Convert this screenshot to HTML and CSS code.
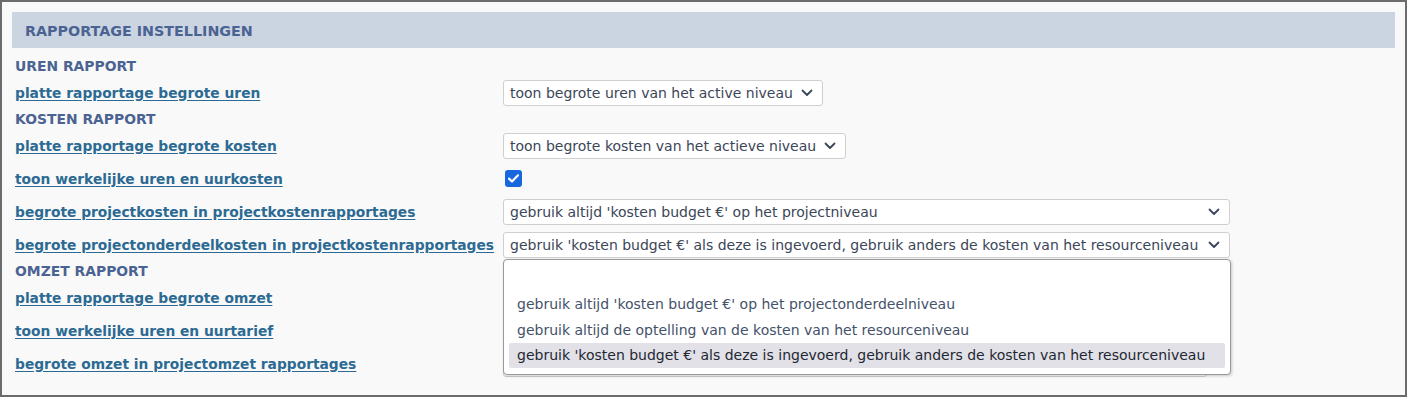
FILE: index.html
```html
<!DOCTYPE html>
<html lang="nl">
<head>
    <meta charset="UTF-8">
    <title>Rapportage instellingen</title>
    <link rel="stylesheet" href="styles.css">
</head>
<body>
    <div class="frame">
        <div class="panel-title">RAPPORTAGE INSTELLINGEN</div>

        <div class="settings">
            <div class="section">UREN RAPPORT</div>
            <div class="row">
                <a class="label" href="#">platte rapportage begrote uren</a>
                <div class="field">
                    <div class="select">toon begrote uren van het active niveau</div>
                </div>
            </div>

            <div class="section">KOSTEN RAPPORT</div>
            <div class="row">
                <a class="label" href="#">platte rapportage begrote kosten</a>
                <div class="field">
                    <div class="select">toon begrote kosten van het actieve niveau</div>
                </div>
            </div>
            <div class="row">
                <a class="label" href="#">toon werkelijke uren en uurkosten</a>
                <div class="field">
                    <span class="checkbox">
                        <svg width="11" height="9" viewBox="0 0 11 9"><path d="M1 4.6 L4 7.5 L10 1.3" fill="none" stroke="#fff" stroke-width="2.2" stroke-linecap="round" stroke-linejoin="round"/></svg>
                    </span>
                </div>
            </div>
            <div class="row">
                <a class="label" href="#">begrote projectkosten in projectkostenrapportages</a>
                <div class="field">
                    <div class="select wide">gebruik altijd 'kosten budget €' op het projectniveau</div>
                </div>
            </div>
            <div class="row">
                <a class="label" href="#">begrote projectonderdeelkosten in projectkostenrapportages</a>
                <div class="field open">
                    <div class="select wide">gebruik 'kosten budget €' als deze is ingevoerd, gebruik anders de kosten van het resourceniveau</div>
                    <ul class="dropdown">
                        <li class="blank"></li>
                        <li>gebruik altijd 'kosten budget €' op het projectonderdeelniveau</li>
                        <li>gebruik altijd de optelling van de kosten van het resourceniveau</li>
                        <li class="active">gebruik 'kosten budget €' als deze is ingevoerd, gebruik anders de kosten van het resourceniveau</li>
                    </ul>
                </div>
            </div>

            <div class="section">OMZET RAPPORT</div>
            <div class="row">
                <a class="label" href="#">platte rapportage begrote omzet</a>
                <div class="field">
                    <div class="select hidden-box short"></div>
                </div>
            </div>
            <div class="row">
                <a class="label" href="#">toon werkelijke uren en uurtarief</a>
                <div class="field"></div>
            </div>
            <div class="row">
                <a class="label" href="#">begrote omzet in projectomzet rapportages</a>
                <div class="field">
                    <div class="select hidden-box long"></div>
                </div>
            </div>
        </div>
    </div>
</body>
</html>
```

FILE: styles.css
```css
html, body {
    margin: 0;
    padding: 0;
}

body {
    font-family: "DejaVu Sans", Verdana, sans-serif;
    background-color: #f9f9f9;
}

.frame {
    box-sizing: border-box;
    height: 397px;
    border: 2px solid #6b6b6b;
    padding: 10px 10px 0 10px;
    overflow: hidden;
}

.panel-title {
    height: 36px;
    line-height: 38px;
    padding-left: 13px;
    background-color: #cbd5e1;
    color: #4b6392;
    font-size: 14.3px;
    font-weight: bold;
}

.settings {
    padding-top: 8px;
}

.section {
    height: 20px;
    line-height: 20px;
    padding-left: 3px;
    color: #4b6392;
    font-size: 13.9px;
    font-weight: bold;
}

.row {
    display: grid;
    grid-template-columns: 491px 1fr;
    align-items: center;
    height: 33px;
}

.label {
    padding-left: 3px;
    color: #2c6a93;
    font-size: 13.8px;
    font-weight: bold;
    text-decoration: underline;
    text-underline-offset: 2px;
}

.field {
    position: relative;
    display: flex;
    align-items: center;
}

.select {
    box-sizing: border-box;
    height: 26px;
    line-height: 24px;
    padding: 0 29px 0 6px;
    border: 1px solid #cfcfcf;
    border-radius: 3px;
    background-color: #fff;
    color: #3b4658;
    font-size: 14px;
    white-space: nowrap;
    background-image: url("data:image/svg+xml,%3Csvg xmlns='http://www.w3.org/2000/svg' width='12' height='8' viewBox='0 0 12 8'%3E%3Cpath d='M1.5 1.5 L6 6 L10.5 1.5' fill='none' stroke='%233b4658' stroke-width='1.8' stroke-linecap='round' stroke-linejoin='round'/%3E%3C/svg%3E");
    background-repeat: no-repeat;
    background-position: right 9px center;
}

.select.wide {
    width: 727px;
}

.select.hidden-box {
    background-image: none;
}

.select.short {
    width: 340px;
}

.select.long {
    width: 704px;
}

.checkbox {
    display: flex;
    align-items: center;
    justify-content: center;
    width: 17px;
    height: 17px;
    margin-left: 2px;
    border-radius: 3px;
    background-color: #1668dc;
}

.dropdown {
    position: absolute;
    top: 27px;
    left: 0;
    z-index: 2;
    box-sizing: border-box;
    width: 728px;
    height: 116px;
    margin: 0;
    padding: 5px;
    list-style: none;
    background-color: #fff;
    border: 1px solid #9a9a9a;
    border-radius: 4px;
    box-shadow: 1px 1px 3px rgba(0, 0, 0, 0.2);
}

.dropdown li {
    height: 26px;
    line-height: 26px;
    padding-left: 8px;
    color: #44526a;
    font-size: 14px;
    white-space: nowrap;
}

.dropdown li.active {
    height: 25px;
    line-height: 25px;
    border-radius: 2px;
    background-color: #e1e1e7;
    color: #1f2733;
}
```
